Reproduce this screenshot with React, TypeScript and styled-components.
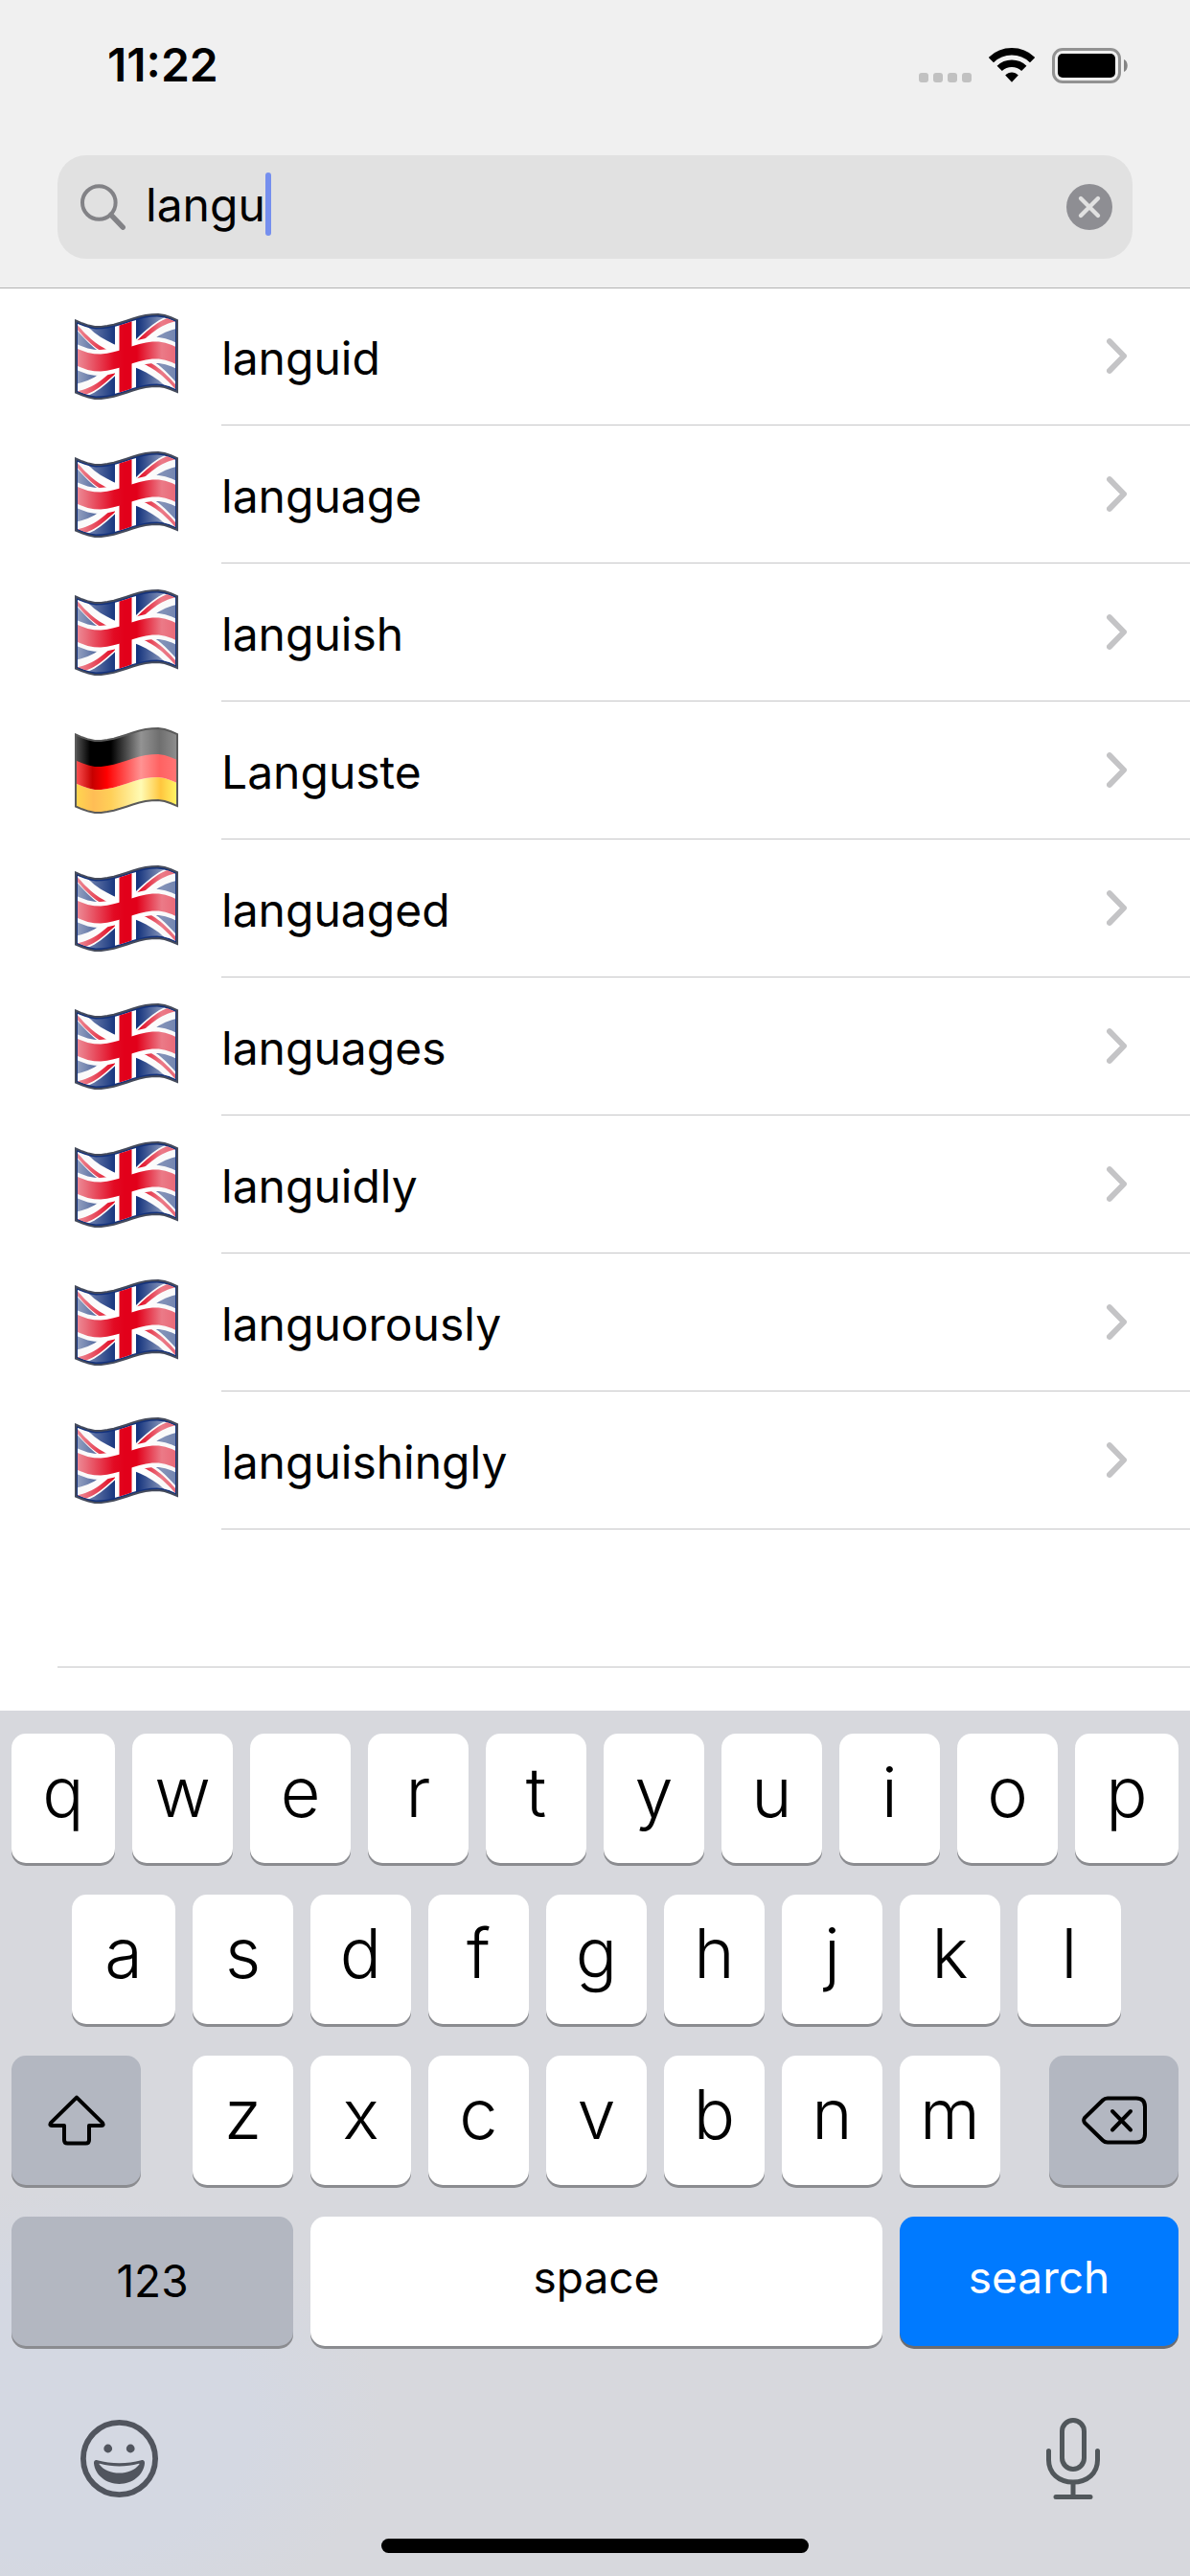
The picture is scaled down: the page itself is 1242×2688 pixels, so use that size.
import React, { useId, useState } from 'react';
import styled, { createGlobalStyle, css } from 'styled-components';

const GlobalStyle = createGlobalStyle`
  *, *::before, *::after { box-sizing: border-box; }
  body {
    margin: 0;
    background: #fff;
    color: #000;
    font-family: Inter, Roboto, "Liberation Sans", sans-serif;
  }
  button, input { font: inherit; color: inherit; border: 0; padding: 0; margin: 0; background: none; }
  button { cursor: pointer; }
  svg { display: block; }
`;

const Screen = styled.div`
  display: flex;
  flex-direction: column;
  min-height: 100vh;
`;

/* ---------- header ---------- */

const Header = styled.header`
  position: relative;
  background: #f0f0f0;
  box-shadow: 0 1px 0 #b2b2b2;
  padding-bottom: 30px;
`;

const StatusBar = styled.div`
  display: flex;
  align-items: center;
  justify-content: space-between;
  height: 162px;
  padding: 0 64px 26px 112px;
`;

const Clock = styled.time`
  font-size: 48px;
  line-height: 58px;
  font-weight: 600;
`;

const StatusIcons = styled.div`
  display: flex;
  align-items: flex-end;
  gap: 18px;
`;

const SearchField = styled.div`
  display: flex;
  align-items: center;
  height: 108px;
  margin: 0 60px;
  padding: 0 21px 0 24px;
  border-radius: 30px;
  background: #e1e1e1;
`;

const SearchLabel = styled.label`
  display: flex;
  align-items: center;
  flex: 1;
  min-width: 0;
  cursor: text;
`;

const SearchInput = styled.input`
  field-sizing: content;
  margin-left: 21px;
  padding-bottom: 4px;
  outline: none;
  caret-color: transparent;
  font-size: 48px;
  line-height: 60px;
`;

const Caret = styled.span`
  width: 6px;
  height: 66px;
  margin-bottom: 6px;
  border-radius: 3px;
  background: #758fee;
`;

const ClearButton = styled.button`
  flex: none;
  border-radius: 50%;
`;

/* ---------- results ---------- */

const Results = styled.ul`
  flex: 1;
  margin: 0;
  padding: 0;
  list-style: none;
`;

const ResultItem = styled.li`
  height: 144px;
  padding-left: 78px;
`;

const ResultLink = styled.a`
  display: flex;
  align-items: center;
  gap: 45px;
  height: 100%;
  color: inherit;
  text-decoration: none;
`;

const ResultBody = styled.span`
  display: flex;
  align-items: center;
  justify-content: space-between;
  flex: 1;
  height: 100%;
  padding-right: 66px;
  border-bottom: 1px solid #c6c6c8;
`;

const Word = styled.span`
  padding-top: 4px;
  font-size: 48px;
  line-height: 60px;
`;

const EmptyRow = styled.li`
  height: 144px;
  margin-left: 60px;
  border-bottom: 1px solid #c6c6c8;
`;

/* ---------- keyboard ---------- */

const Keyboard = styled.section`
  background:
    radial-gradient(ellipse 340px 240px at 60px 82%, #d4d8e2 60%, transparent),
    #d7d8dd;
  padding: 24px 12px;
`;

const KeyRows = styled.div`
  display: flex;
  flex-direction: column;
  gap: 33px;
`;

const KeyRow = styled.div<{ $inset?: boolean }>`
  display: flex;
  gap: 18px;
  padding: ${(p) => (p.$inset ? '0 60px 0 63px' : '0')};
`;

const LetterGroup = styled.div`
  display: flex;
  gap: 18px;
  flex: 843 0 0;
  padding: 0 33px 0 36px;
`;

type Tone = 'light' | 'dark' | 'accent';

const tones = {
  light: css`
    background: #fff;
    box-shadow: 0 3px 0 #8b8c90;
  `,
  dark: css`
    background: #b3b7c1;
    box-shadow: 0 3px 0 #8b8c90;
  `,
  accent: css`
    background: #007aff;
    box-shadow: 0 3px 0 #6b6c70;
    color: #fff;
  `,
};

const Key = styled.button<{ $grow: number; $tone?: Tone }>`
  display: flex;
  align-items: center;
  justify-content: center;
  flex: ${(p) => p.$grow} 0 0;
  min-width: 0;
  height: 135px;
  border-radius: 15px;
  ${(p) => tones[p.$tone ?? 'light']}
`;

const LetterKey = styled(Key)`
  padding-bottom: 13px;
  font-size: 72px;
  line-height: 88px;
  font-weight: 350;
`;

const ActionKey = styled(Key)`
  padding-bottom: 2px;
  font-size: 46px;
  line-height: 56px;
`;

const WordKey = styled(ActionKey)`
  padding-bottom: 10px;
`;

const Tools = styled.div`
  display: flex;
  align-items: center;
  justify-content: space-between;
  height: 201px;
  padding: 34px 82px 0 72px;
`;

const ToolButton = styled.button`
  display: flex;
`;

const HomeIndicator = styled.div`
  width: 446px;
  max-width: 40%;
  height: 15px;
  margin: 0 auto;
  border-radius: 8px;
  background: #000;
`;

/* ---------- icons ---------- */

const SignalDots = () => (
  <svg width="55" height="11" viewBox="0 0 55 11" fill="#c1c1c1" aria-hidden="true">
    {[0, 15, 30, 45].map((x) => (
      <rect key={x} x={x} y="0" width="10" height="10" rx="3" />
    ))}
  </svg>
);

const WifiIcon = () => (
  <svg width="48" height="37" viewBox="0 0 48 37" aria-hidden="true">
    <g fill="none" stroke="#000">
      <path d="M2.4 12.6 A31 31 0 0 1 45.6 12.6" strokeWidth="7.5" />
      <path d="M11.2 21.4 A18.2 18.2 0 0 1 36.8 21.4" strokeWidth="7.5" />
    </g>
    <path d="M17.2 28.6 C21 24.4 27 24.4 30.8 28.6 L24 35.8 Z" fill="#000" />
  </svg>
);

const BatteryIcon = () => (
  <svg width="80" height="37" viewBox="0 0 80 37" aria-hidden="true">
    <rect x="1.5" y="1.5" width="69" height="34" rx="9.5" fill="none" stroke="#929292" strokeWidth="3" />
    <rect x="6" y="6" width="60" height="25" rx="5" fill="#000" />
    <path d="M75 12 C80 14 80 23 75 25 Z" fill="#848484" />
  </svg>
);

const SearchIcon = () => (
  <svg width="47" height="48" viewBox="0 0 47 48" fill="none" stroke="#828286" aria-hidden="true">
    <circle cx="19.3" cy="19.5" r="17.3" strokeWidth="4" />
    <path d="M31.8 32.2 L44.2 45.2" strokeWidth="5.4" strokeLinecap="round" />
  </svg>
);

const ClearIcon = () => (
  <svg width="48" height="48" viewBox="0 0 48 48" aria-hidden="true">
    <circle cx="24" cy="24" r="24" fill="#8e8e93" />
    <path d="M15 15 L33 33 M33 15 L15 33" stroke="#e1e1e1" strokeWidth="4.4" strokeLinecap="round" />
  </svg>
);

const Chevron = () => (
  <svg width="21" height="37" viewBox="0 0 21 37" fill="none" aria-hidden="true">
    <path d="M3 3.2 L18 18.5 L3 33.8" stroke="#c4c4c6" strokeWidth="6" strokeLinecap="round" strokeLinejoin="round" />
  </svg>
);

const ShiftIcon = () => (
  <svg width="60" height="53" viewBox="0 0 60 53" fill="none" stroke="#000" strokeWidth="4" strokeLinejoin="round" aria-hidden="true">
    <path d="M30 2.6 L57 29.2 Q58.6 32 56 32 H43 V47 Q43 50.5 39.5 50.5 H20.5 Q17 50.5 17 47 V32 H4 Q1.4 32 3 29.2 Z" />
  </svg>
);

const DeleteIcon = () => (
  <svg width="68" height="51" viewBox="0 0 68 51" fill="none" stroke="#000" strokeWidth="4" strokeLinecap="round" strokeLinejoin="round" aria-hidden="true">
    <path d="M27 2.5 H57 Q66 2.5 66 11.5 V39.5 Q66 48.5 57 48.5 H27 Q24 48.5 22 46.5 L3 28 Q1.4 25.5 3 23 L22 4.5 Q24 2.5 27 2.5 Z" />
    <path d="M32 16 L51 35.5 M51 16 L32 35.5" />
  </svg>
);

const EmojiIcon = () => (
  <svg width="81" height="81" viewBox="0 0 81 81" aria-hidden="true">
    <circle cx="40.5" cy="40.5" r="37.6" fill="none" stroke="#51555e" strokeWidth="5.8" />
    <circle cx="28.7" cy="30" r="4.4" fill="#51555e" />
    <circle cx="52.2" cy="30" r="4.4" fill="#51555e" />
    <path
      fill="#51555e"
      fillRule="evenodd"
      d="M17.6 42.2 C32 46.2 49 46.2 63.4 42.2 C66 41.6 67.2 43 67 45.6 C65.8 58 54 67 40.5 67 C27 67 15.2 58 14 45.6 C13.8 43 15 41.6 17.6 42.2 Z M19.6 46.4 C24 52.2 32 55.6 40.5 55.6 C49 55.6 57 52.2 61.4 46.4 C61.8 45.8 61.4 45.6 60.8 45.7 C47 49.3 34 49.3 20.2 45.7 C19.6 45.6 19.2 45.8 19.6 46.4 Z"
    />
  </svg>
);

const MicIcon = () => (
  <svg width="56" height="86" viewBox="0 0 56 86" fill="none" stroke="#51575b" strokeWidth="5" strokeLinecap="round" aria-hidden="true">
    <rect x="16.5" y="2.5" width="23" height="51" rx="11.5" />
    <path d="M2.5 34.5 V44 C2.5 57.5 13 67 28 67 C43 67 53.5 57.5 53.5 44 V34.5" />
    <path d="M28 68 V82.5 M10 82.5 H46" />
  </svg>
);

/* ---------- flags ---------- */

type Point = [number, number];

const FLAG_W = 108;
const FLAG_H = 75;

/* Height of the cloth's top edge at x: it dips at 24 and crests at 85. */
const wave = (x: number) => {
  if (x < 24) return 7.5 + 6.5 * Math.cos((Math.PI * (24 - x)) / 46);
  if (x > 85) return 7.5 - 6.5 * Math.cos((Math.PI * (x - 85)) / 46);
  return 7.5 + 6.5 * Math.cos((Math.PI * (x - 24)) / 61);
};

/* Bends a polygon drawn on a flat flag along the wave. */
const bend = (points: Point[]) => {
  const steps = 16;
  const out: string[] = [];
  points.forEach(([x0, y0], i) => {
    const [x1, y1] = points[(i + 1) % points.length];
    for (let s = 0; s < steps; s += 1) {
      const x = x0 + ((x1 - x0) * s) / steps;
      const y = y0 + ((y1 - y0) * s) / steps;
      out.push(`${x.toFixed(1)} ${(y + wave(x)).toFixed(1)}`);
    }
  });
  return `M${out.join('L')}Z`;
};

const box = (x0: number, y0: number, x1: number, y1: number) =>
  bend([[x0, y0], [x1, y0], [x1, y1], [x0, y1]]);

const stripe = (from: Point, to: Point, above: number, below: number) =>
  bend([
    [from[0], from[1] - above],
    [to[0], to[1] - above],
    [to[0], to[1] + below],
    [from[0], from[1] + below],
  ]);

const OUTLINE = box(1, 0, FLAG_W - 1, FLAG_H);

const BritishFlag = () => {
  const id = useId().replace(/[^a-zA-Z0-9]/g, '');
  return (
    <svg width="108" height="90" viewBox="0 0 108 90" role="img" aria-label="English">
      <defs>
        <clipPath id={`c${id}`}>
          <path d={box(3, 2.5, FLAG_W - 3, FLAG_H - 2.5)} />
        </clipPath>
        <linearGradient id={`g${id}`} gradientUnits="userSpaceOnUse" x1="0" x2="108">
          <stop offset="0" stopColor="#f4f4f4" stopOpacity="0.6" />
          <stop offset="0.1" stopColor="#f4f4f4" stopOpacity="0.46" />
          <stop offset="0.38" stopColor="#f4f4f4" stopOpacity="0.04" />
          <stop offset="0.48" stopColor="#f4f4f4" stopOpacity="0" />
          <stop offset="0.6" stopColor="#f4f4f4" stopOpacity="0" />
          <stop offset="0.84" stopColor="#f4f4f4" stopOpacity="0.5" />
          <stop offset="1" stopColor="#f4f4f4" stopOpacity="0.42" />
        </linearGradient>
      </defs>
      <path d={OUTLINE} fill="#12317c" />
      <g clipPath={`url(#c${id})`}>
        <path d={stripe([0, 0], [108, 75], 8, 8)} fill="#fff" />
        <path d={stripe([0, 75], [108, 0], 8, 8)} fill="#fff" />
        <g fill="#e2001a">
          <path d={stripe([0, 2], [34, 25], 0, 5)} />
          <path d={stripe([0, 75], [46, 43], 0, 6)} />
          <path d={stripe([64, 31], [108, 0], 6, 0)} />
          <path d={stripe([70, 49], [108, 75], 5, 0)} />
        </g>
        <path d={box(0, 24, 108, 51)} fill="#fff" />
        <path d={box(42, 0, 64, 75)} fill="#fff" />
        <path d={box(0, 28.5, 108, 46.5)} fill="#e2001a" />
        <path d={box(46.5, 0, 59.5, 75)} fill="#e2001a" />
        <rect width="108" height="90" fill={`url(#g${id})`} />
      </g>
      <path d={OUTLINE} fill="none" stroke="#454b5c" strokeWidth="2" />
    </svg>
  );
};

const GermanFlag = () => {
  const id = useId().replace(/[^a-zA-Z0-9]/g, '');
  return (
    <svg width="108" height="90" viewBox="0 0 108 90" role="img" aria-label="German">
      <defs>
        <linearGradient id={`k${id}`} gradientUnits="userSpaceOnUse" x1="0" x2="108">
          <stop offset="0" stopColor="#5a5a5a" />
          <stop offset="0.15" stopColor="#000" />
          <stop offset="0.35" stopColor="#000" />
          <stop offset="0.64" stopColor="#939393" />
          <stop offset="0.82" stopColor="#6f6f6f" />
          <stop offset="1" stopColor="#909090" />
        </linearGradient>
        <linearGradient id={`r${id}`} gradientUnits="userSpaceOnUse" x1="0" x2="108">
          <stop offset="0" stopColor="#ff5a5a" />
          <stop offset="0.17" stopColor="#c60000" />
          <stop offset="0.31" stopColor="#ff0000" />
          <stop offset="0.64" stopColor="#ff9393" />
          <stop offset="0.82" stopColor="#ff6262" />
          <stop offset="1" stopColor="#ff7676" />
        </linearGradient>
        <linearGradient id={`y${id}`} gradientUnits="userSpaceOnUse" x1="0" x2="108">
          <stop offset="0" stopColor="#ffd84f" />
          <stop offset="0.18" stopColor="#ffbd55" />
          <stop offset="0.35" stopColor="#ffcf58" />
          <stop offset="0.64" stopColor="#fffbb4" />
          <stop offset="0.83" stopColor="#ffc63e" />
          <stop offset="1" stopColor="#fff868" />
        </linearGradient>
      </defs>
      <path d={box(1, 0, 107, 28)} fill={`url(#k${id})`} />
      <path d={box(1, 51, 107, 75)} fill={`url(#y${id})`} />
      <path d={box(1, 27, 107, 51)} fill={`url(#r${id})`} />
      <path d={OUTLINE} fill="none" stroke="#5a5a5a" strokeWidth="2" />
    </svg>
  );
};

/* ---------- data ---------- */

type Result = { word: string; language: 'en' | 'de' };

const results: Result[] = [
  { word: 'languid', language: 'en' },
  { word: 'language', language: 'en' },
  { word: 'languish', language: 'en' },
  { word: 'Languste', language: 'de' },
  { word: 'languaged', language: 'en' },
  { word: 'languages', language: 'en' },
  { word: 'languidly', language: 'en' },
  { word: 'languorously', language: 'en' },
  { word: 'languishingly', language: 'en' },
];

const Letters = ({ keys, onType }: { keys: string; onType: (key: string) => void }) => (
  <>
    {keys.split('').map((key, i, all) => (
      <LetterKey
        key={key}
        type="button"
        $grow={all.length > 7 && (i === 0 || i === all.length - 1) ? 108 : 105}
        onClick={() => onType(key)}
      >
        {key}
      </LetterKey>
    ))}
  </>
);

export default function App() {
  const [query, setQuery] = useState('langu');
  const type = (key: string) => setQuery((q) => q + key);

  return (
    <>
      <GlobalStyle />
      <Screen>
        <Header>
          <StatusBar>
            <Clock>11:22</Clock>
            <StatusIcons>
              <SignalDots />
              <WifiIcon />
              <BatteryIcon />
            </StatusIcons>
          </StatusBar>
          <SearchField role="search">
            <SearchLabel>
              <SearchIcon />
              <SearchInput
                aria-label="Search"
                type="text"
                value={query}
                onChange={(e) => setQuery(e.target.value)}
              />
              <Caret />
            </SearchLabel>
            <ClearButton type="button" aria-label="Clear text" onClick={() => setQuery('')}>
              <ClearIcon />
            </ClearButton>
          </SearchField>
        </Header>

        <Results>
          {results.map(({ word, language }) => (
            <ResultItem key={word}>
              <ResultLink href={`#${word}`}>
                {language === 'en' ? <BritishFlag /> : <GermanFlag />}
                <ResultBody>
                  <Word>{word}</Word>
                  <Chevron />
                </ResultBody>
              </ResultLink>
            </ResultItem>
          ))}
          <EmptyRow aria-hidden="true" />
        </Results>

        <Keyboard aria-label="Keyboard">
          <KeyRows>
            <KeyRow>
              <Letters keys="qwertyuiop" onType={type} />
            </KeyRow>
            <KeyRow $inset>
              <Letters keys="asdfghjkl" onType={type} />
            </KeyRow>
            <KeyRow>
              <Key type="button" $grow={135} $tone="dark" aria-label="Shift">
                <ShiftIcon />
              </Key>
              <LetterGroup>
                <Letters keys="zxcvbnm" onType={type} />
              </LetterGroup>
              <Key
                type="button"
                $grow={135}
                $tone="dark"
                aria-label="Delete"
                onClick={() => setQuery((q) => q.slice(0, -1))}
              >
                <DeleteIcon />
              </Key>
            </KeyRow>
            <KeyRow>
              <ActionKey type="button" $grow={294} $tone="dark">
                123
              </ActionKey>
              <WordKey type="button" $grow={597} onClick={() => type(' ')}>
                space
              </WordKey>
              <WordKey type="button" $grow={291} $tone="accent">
                search
              </WordKey>
            </KeyRow>
          </KeyRows>
          <Tools>
            <ToolButton type="button" aria-label="Emoji">
              <EmojiIcon />
            </ToolButton>
            <ToolButton type="button" aria-label="Dictate">
              <MicIcon />
            </ToolButton>
          </Tools>
          <HomeIndicator />
        </Keyboard>
      </Screen>
    </>
  );
}
